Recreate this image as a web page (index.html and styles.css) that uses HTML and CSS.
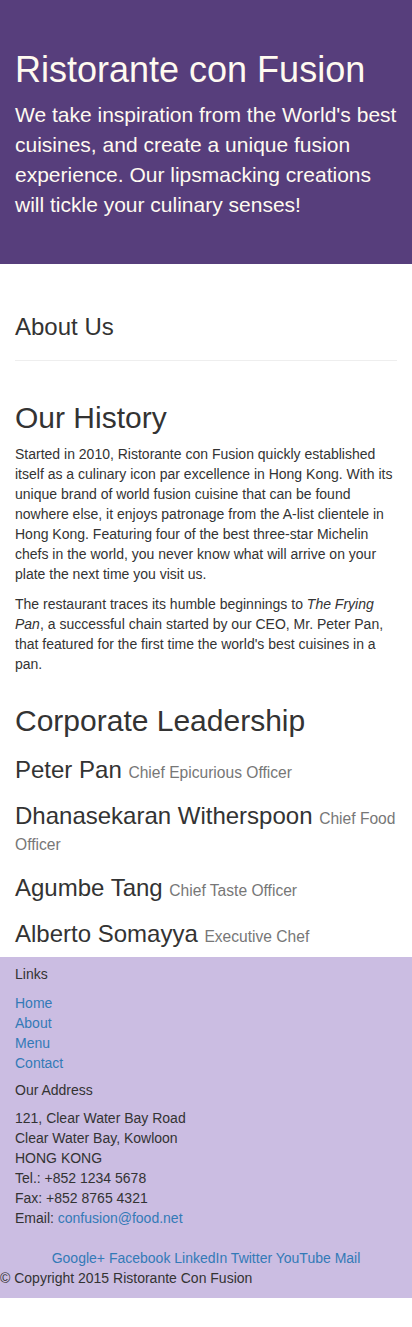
FILE: index.html
```html
<!DOCTYPE html>
<html lang="en">
<head>
<meta charset="utf-8">
<meta name="viewport" content="width=device-width, initial-scale=1">
<title>Ristorante con Fusion: About Us</title>
<link rel="stylesheet" href="styles.css">
</head>
<body>
<header class="jumbotron">
  <div class="container">
    <div class="row">
      <div class="col">
        <h1>Ristorante con Fusion</h1>
        <p>We take inspiration from the World's best cuisines, and create a unique fusion experience. Our lipsmacking creations will tickle your culinary senses!</p>
      </div>
    </div>
  </div>
</header>

<main class="container">
  <div class="row">
    <div class="col">
      <h3>About Us</h3>
      <hr>
    </div>
  </div>
  <div class="row">
    <div class="col">
      <h2>Our History</h2>
      <p>Started in 2010, Ristorante con Fusion quickly established itself as a culinary icon par excellence in Hong Kong. With its unique brand of world fusion cuisine that can be found nowhere else, it enjoys patronage from the A-list clientele in Hong Kong. Featuring four of the best three-star Michelin chefs in the world, you never know what will arrive on your plate the next time you visit us.</p>
      <p>The restaurant traces its humble beginnings to <em>The Frying Pan</em>, a successful chain started by our CEO, Mr. Peter Pan, that featured for the first time the world's best cuisines in a pan.</p>
    </div>
  </div>
  <div class="row">
    <div class="col">
      <h2>Corporate Leadership</h2>
      <h3 class="leader">Peter Pan <small>Chief Epicurious Officer</small></h3>
      <h3 class="leader">Dhanasekaran Witherspoon <small>Chief Food Officer</small></h3>
      <h3 class="leader">Agumbe Tang <small>Chief Taste Officer</small></h3>
      <h3 class="leader">Alberto Somayya <small>Executive Chef</small></h3>
    </div>
  </div>
</main>

<footer class="footer">
  <div class="container">
    <div class="row">
      <div class="fcol">
        <h5>Links</h5>
        <ul class="list-unstyled">
          <li><a href="#">Home</a></li>
          <li><a href="#">About</a></li>
          <li><a href="#">Menu</a></li>
          <li><a href="#">Contact</a></li>
        </ul>
      </div>
      <div class="fcol">
        <h5>Our Address</h5>
        <address>
          121, Clear Water Bay Road<br>
          Clear Water Bay, Kowloon<br>
          HONG KONG<br>
          Tel.: +852 1234 5678<br>
          Fax: +852 8765 4321<br>
          Email: <a href="#">confusion@food.net</a>
        </address>
      </div>
    </div>
  </div>
  <div class="social">
    <a href="#">Google+</a>
    <a href="#">Facebook</a>
    <a href="#">LinkedIn</a>
    <a href="#">Twitter</a>
    <a href="#">YouTube</a>
    <a href="#">Mail</a>
  </div>
  <p class="copyright">© Copyright 2015 Ristorante Con Fusion</p>
</footer>
</body>
</html>
```

FILE: styles.css
```css
* { box-sizing: border-box; }
html, body { margin: 0; padding: 0; }
body {
  font-family: "Liberation Sans", Arial, Helvetica, sans-serif;
  font-size: 14px;
  line-height: 1.42857143;
  color: #333;
  background: #fff;
}
a { color: #337ab7; text-decoration: none; }

.container { padding: 0 15px; }
.row { margin: 0 -15px; }
.row::before, .row::after { content: " "; display: table; }
.row::after { clear: both; }
.col { float: left; width: 100%; padding: 0 15px; min-height: 1px; }
.fcol { padding: 0 15px; }

h1, h2, h3, h5 { font-family: inherit; font-weight: 500; line-height: 1.1; color: inherit; }
h1, h2, h3 { margin: 20px 0 10px; }
h5 { margin: 10px 0; font-size: 14px; }
h1 { font-size: 36px; }
h2 { font-size: 30px; }
h3 { font-size: 24px; }
h3.leader { line-height: 1.085; }
h3 small { font-size: 65%; font-weight: 400; line-height: 1; color: #777; }
p { margin: 0 0 10px; }
hr { margin: 20px 0; border: 0; border-top: 1px solid #eee; height: 0; }

.jumbotron {
  background: #573e7c;
  color: #fffaf0;
  padding: 30px 0;
  margin-bottom: 30px;
}
.jumbotron p { font-size: 21px; font-weight: 200; margin-bottom: 14px; line-height: 1.42857143; }

.footer { background: #cbbde2; padding: 0; }
.list-unstyled { list-style: none; padding: 0; margin: 0 0 10px; }
address { font-style: normal; margin: 0 0 20px; line-height: 1.42857143; }
.social { text-align: center; }
.copyright { margin: 0; padding-bottom: 10px; }
```
